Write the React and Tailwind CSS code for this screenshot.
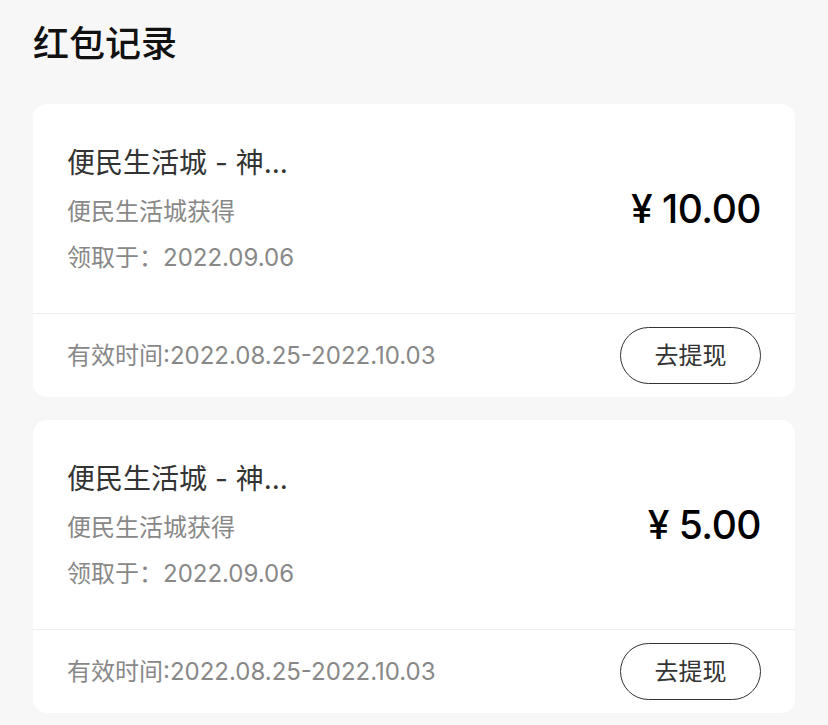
import React from 'react';

const records = [
  { title: '便民生活城 - 神...', source: '便民生活城获得', date: '2022.09.06', amount: '10.00', valid: '2022.08.25-2022.10.03' },
  { title: '便民生活城 - 神...', source: '便民生活城获得', date: '2022.09.06', amount: '5.00', valid: '2022.08.25-2022.10.03' },
];

const font = { fontFamily: 'Inter, "Noto Sans CJK SC", sans-serif' };

const RecordCard = ({ item }) => (
  <div className="bg-white rounded-[14px]">
    <div className="h-[209px] px-[34px] flex items-center justify-between">
      <div className="flex flex-col">
        <div className="text-[28px] leading-[40px] text-[#333]">{item.title}</div>
        <div className="mt-[12px] text-[24px] leading-[34px] text-[#888]">{item.source}</div>
        <div className="mt-[12px] text-[24px] leading-[34px] text-[#888]">领取于：{item.date}</div>
      </div>
      <div className="text-[39px] leading-[48px] font-medium tracking-[-0.5px] text-black">¥ {item.amount}</div>
    </div>
    <div className="border-t border-[#eeeeee] h-[84px] px-[34px] flex items-center justify-between">
      <div className="text-[24px] leading-[34px] text-[#888]">有效时间:{item.valid}</div>
      <button className="w-[141px] h-[57px] rounded-full border border-[#333] text-[24px] text-[#333] flex items-center justify-center">
        去提现
      </button>
    </div>
  </div>
);

const App = () => {
  return (
    <div className="min-h-screen bg-[#f7f7f7] px-[33px] pt-[20px] pb-[20px]" style={font}>
      <h1 className="text-[36px] leading-[48px] font-medium text-[#111] mb-[36px]">红包记录</h1>
      <div className="flex flex-col gap-[23px]">
        {records.map((r, i) => (
          <RecordCard key={i} item={r} />
        ))}
      </div>
    </div>
  );
};

export default App;
